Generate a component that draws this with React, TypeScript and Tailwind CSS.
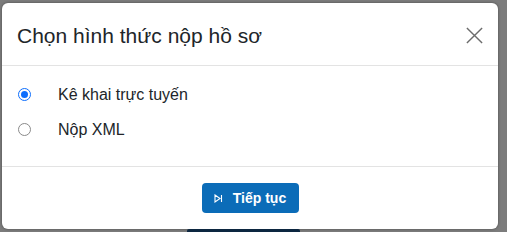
import React from "react";

export default function App() {
  return (
    <div className="w-[507px] h-[232px] bg-[#7c7c7c] overflow-hidden pt-[3px] pl-[2px]" style={{ fontFamily: "'Liberation Sans', Arial, sans-serif" }}>
      <div className="w-[496px] h-[226px] bg-white rounded-[6px] flex flex-col shadow-[0_0_3px_rgba(0,0,0,0.4)]">
        <div className="h-[63px] flex items-center justify-between pl-[15px] pr-[14px] border-b border-[#e3e3e3]">
          <div className="text-[21px] text-[#212529] leading-none pt-[2px]">Chọn hình thức nộp hồ sơ</div>
          <svg width="19" height="19" viewBox="0 0 20 20" className="mt-[2px]">
            <path d="M2 2 L18 18 M18 2 L2 18" stroke="#6c6c6c" strokeWidth="1.5" />
          </svg>
        </div>
        <div className="h-[101px] flex flex-col pt-[21px] pl-[16px] gap-[20px] border-b border-[#e3e3e3]">
          <label className="flex items-center h-[15px]">
            <span className="w-[13px] h-[13px] rounded-full border border-[#0d6efd] flex items-center justify-center">
              <span className="w-[7px] h-[7px] rounded-full bg-[#0d6efd]" />
            </span>
            <span className="ml-[27px] text-[16px] text-[#212529]">Kê khai trực tuyến</span>
          </label>
          <label className="flex items-center h-[15px]">
            <span className="w-[13px] h-[13px] rounded-full border border-[#8a8a8a]" />
            <span className="ml-[27px] text-[16px] text-[#212529]">Nộp XML</span>
          </label>
        </div>
        <div className="flex-1 flex justify-center pt-[16px]">
          <button className="w-[97px] h-[30px] bg-[#0b6cb8] rounded-[4px] text-white text-[14px] font-bold flex items-center justify-center gap-[10px]">
            <svg width="9" height="9" viewBox="0 0 9 9">
              <path d="M1 1 L6 4.5 L1 8 Z M7.5 1 V8" stroke="white" strokeWidth="1.1" fill="none" />
            </svg>
            <span>Tiếp tục</span>
          </button>
        </div>
      </div>
      <div className="ml-[185px] w-[113px] h-[4px] bg-[#0c2640] rounded-t-[2px]" />
    </div>
  );
}
